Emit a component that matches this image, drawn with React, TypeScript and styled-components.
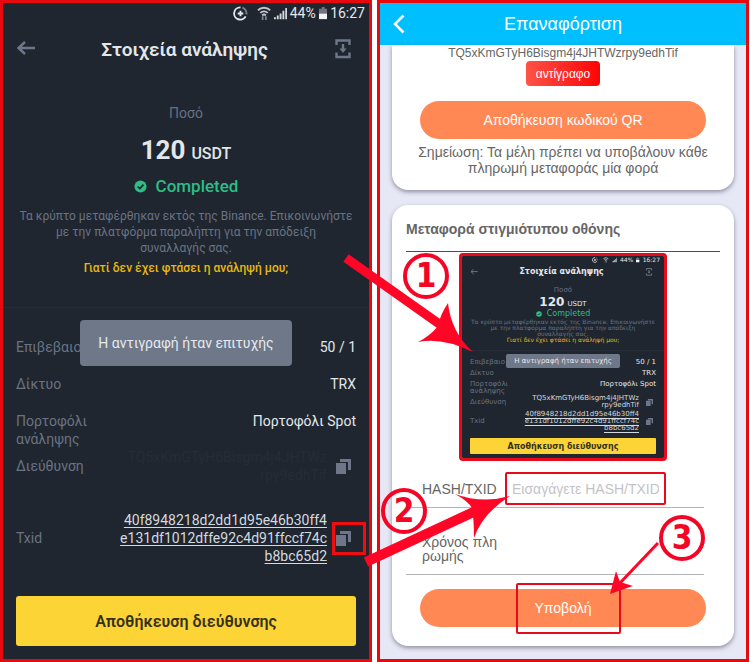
import React from "react";
import styled, { createGlobalStyle, css, ThemeProvider } from "styled-components";

const GlobalStyle = createGlobalStyle`
  *, *::before, *::after { box-sizing: border-box; }
  body { margin: 0; background: #fff; }
  button, input { font: inherit; }
  p, h1, h2, dl, dd, dt, figure { margin: 0; }
`;

/* ---------- Receipt metrics: full screen and attached preview ---------- */

const full = {
  font: '"Roboto", "Noto Sans", sans-serif',
  side: 13,
  statusH: 20, statusSize: 14, statusGap: 3, statusIcon: 15,
  headH: 52, headSize: 19, headIcon: 20,
  labelTop: 28, labelLine: 20, labelSize: 14,
  amountTop: 10, amountLine: 34, amountSize: 26, unitSize: 16, amountGap: 6,
  doneTop: 8, doneLine: 22, doneSize: 17, doneIcon: 13, doneGap: 9,
  descTop: 11, descLine: 16, descSize: 12,
  linkTop: 2, linkLine: 20, linkSize: 12,
  ruleTop: 29, listTop: 30,
  rowLine: 18, rowSize: 14, rowGap: 19, labelW: 90,
  txTop: 27, copyIcon: 15, copyW: 26,
  saveTop: 31, saveH: 50, saveSize: 16, saveRadius: 3, bottom: 13,
  toastTop: 317, toastH: 46, toastW: 212, toastSize: 14, toastRadius: 4,
  address: "#262c35",
};

const mini: typeof full = {
  font: '"DejaVu Sans", sans-serif',
  side: 8,
  statusH: 8, statusSize: 6, statusGap: 3, statusIcon: 6,
  headH: 15, headSize: 8, headIcon: 8,
  labelTop: 8, labelLine: 7, labelSize: 7,
  amountTop: 3, amountLine: 10, amountSize: 12, unitSize: 7, amountGap: 3,
  doneTop: 3, doneLine: 7, doneSize: 8, doneIcon: 6, doneGap: 5,
  descTop: 2, descLine: 6, descSize: 6,
  linkTop: 0, linkLine: 6, linkSize: 6,
  ruleTop: 7, listTop: 8,
  rowLine: 7, rowSize: 7, rowGap: 4, labelW: 50,
  txTop: 2, copyIcon: 7, copyW: 14,
  saveTop: 6, saveH: 16, saveSize: 8, saveRadius: 1, bottom: 4,
  toastTop: 98, toastH: 14, toastW: 114, toastSize: 7, toastRadius: 2,
  address: "#d5d9de",
};

type Metrics = { theme: any };

/* ---------- Page ---------- */

const Page = styled.main`
  position: relative;
  display: grid;
  grid-template-columns: 1fr 1fr;
  gap: 5px;
  padding-right: 1px;
`;

const Panel = styled.section<{ $bg: string }>`
  border: 3px solid #e60a0e;
  background: ${(p) => p.$bg};
  min-width: 0;
`;

/* ---------- Receipt ---------- */

const Receipt = styled.div<Metrics>`
  position: relative;
  background: #1f2630;
  color: #e3e6ea;
  font-family: ${(p) => p.theme.font};
  text-align: center;
  white-space: nowrap;
  height: 100%;
  padding-bottom: ${(p) => p.theme.bottom}px;
`;

const StatusBar = styled.div<Metrics>`
  display: flex;
  align-items: center;
  justify-content: flex-end;
  gap: ${(p) => p.theme.statusGap}px;
  height: ${(p) => p.theme.statusH}px;
  padding-right: 4px;
  font-size: ${(p) => p.theme.statusSize}px;
  line-height: 1;
  svg { height: ${(p) => p.theme.statusIcon}px; width: auto; }
`;

const ReceiptHead = styled.header<Metrics>`
  display: grid;
  grid-template-columns: auto 1fr auto;
  align-items: center;
  height: ${(p) => p.theme.headH}px;
  padding: 0 ${(p) => p.theme.side + 3}px 0 ${(p) => p.theme.side}px;
  svg { display: block; width: ${(p) => p.theme.headIcon}px; height: ${(p) => p.theme.headIcon}px; }
`;

const ReceiptTitle = styled.h1<Metrics>`
  font-size: ${(p) => p.theme.headSize}px;
  line-height: 1;
  font-weight: 600;
`;

const PlainButton = styled.button`
  position: relative;
  display: block;
  padding: 0;
  border: 0;
  background: none;
  color: #6d7789;
`;

const AmountLabel = styled.p<Metrics>`
  margin-top: ${(p) => p.theme.labelTop}px;
  line-height: ${(p) => p.theme.labelLine}px;
  font-size: ${(p) => p.theme.labelSize}px;
  color: #687182;
`;

const Amount = styled.p<Metrics>`
  display: flex;
  justify-content: center;
  align-items: baseline;
  gap: ${(p) => p.theme.amountGap}px;
  height: ${(p) => p.theme.amountLine}px;
  margin-top: ${(p) => p.theme.amountTop}px;
  line-height: ${(p) => p.theme.amountLine}px;
  font-size: ${(p) => p.theme.unitSize}px;
  font-weight: 500;
  strong { font-size: ${(p) => p.theme.amountSize}px; font-weight: 700; }
`;

const Done = styled.p<Metrics>`
  display: flex;
  justify-content: center;
  align-items: center;
  gap: ${(p) => p.theme.doneGap}px;
  margin-top: ${(p) => p.theme.doneTop}px;
  line-height: ${(p) => p.theme.doneLine}px;
  font-size: ${(p) => p.theme.doneSize}px;
  font-weight: 500;
  color: #2dbd85;
  svg { width: ${(p) => p.theme.doneIcon}px; height: ${(p) => p.theme.doneIcon}px; }
`;

const Description = styled.p<Metrics>`
  margin-top: ${(p) => p.theme.descTop}px;
  line-height: ${(p) => p.theme.descLine}px;
  font-size: ${(p) => p.theme.descSize}px;
  color: #6a7382;
`;

const HelpLink = styled.a<Metrics>`
  display: block;
  margin-top: ${(p) => p.theme.linkTop}px;
  line-height: ${(p) => p.theme.linkLine}px;
  font-size: ${(p) => p.theme.linkSize}px;
  font-weight: 500;
  color: #e6b90f;
  text-decoration: none;
`;

const Details = styled.dl<Metrics>`
  margin-top: ${(p) => p.theme.ruleTop}px;
  padding: ${(p) => p.theme.listTop}px ${(p) => p.theme.side}px 0;
  border-top: 1px solid #262d38;
  font-size: ${(p) => p.theme.rowSize}px;
  line-height: ${(p) => p.theme.rowLine}px;
`;

const DetailRow = styled.div<Metrics & { $space?: "row" | "tx"; $middle?: boolean }>`
  display: flex;
  justify-content: space-between;
  align-items: ${(p) => (p.$middle ? "center" : "flex-start")};
  margin-top: ${(p) => (p.$space === "row" ? p.theme.rowGap : p.$space === "tx" ? p.theme.txTop : 0)}px;
  dt { width: ${(p) => p.theme.labelW}px; text-align: left; color: #6a7382; }
  dd { display: flex; align-items: center; text-align: right; }
`;

const AddressText = styled.span<Metrics>`
  color: ${(p) => p.theme.address};
`;

const TxLink = styled.a`
  color: #d5d9de;
  text-decoration: underline;
  text-underline-offset: 2px;
  text-decoration-thickness: 1px;
`;

const CopyButton = styled(PlainButton)<Metrics & { $marked?: boolean }>`
  width: ${(p) => p.theme.copyW}px;
  svg { display: block; margin: 0 auto; width: ${(p) => p.theme.copyIcon}px; height: ${(p) => p.theme.copyIcon}px; }
  margin-left: 3px;
  ${(p) =>
    p.$marked &&
    css`
      &::after {
        content: "";
        position: absolute;
        inset: -9px -10px -9px 2px;
        border: 3px solid #ee0e12;
      }
    `}
`;

const SaveAddress = styled.button<Metrics>`
  display: block;
  width: calc(100% - ${(p) => p.theme.side * 2}px);
  height: ${(p) => p.theme.saveH}px;
  margin: ${(p) => p.theme.saveTop}px auto 0;
  padding: 0;
  border: 0;
  border-radius: ${(p) => p.theme.saveRadius}px;
  background: #fcd435;
  color: #35311f;
  font-size: ${(p) => p.theme.saveSize}px;
  font-weight: 600;
`;

const Toast = styled.div<Metrics>`
  position: absolute;
  top: ${(p) => p.theme.toastTop}px;
  left: 50%;
  transform: translateX(-50%);
  display: flex;
  align-items: center;
  justify-content: center;
  width: ${(p) => p.theme.toastW}px;
  height: ${(p) => p.theme.toastH}px;
  border-radius: ${(p) => p.theme.toastRadius}px;
  background: #6f7889;
  color: #e6e9ee;
  font-size: ${(p) => p.theme.toastSize}px;
`;

const CopyIcon = () => (
  <svg viewBox="0 0 15 15" fill="currentColor" aria-hidden="true">
    <path d="M0 4h10v11H0z" />
    <path d="M4 0h11v11h-3V3H4z" />
  </svg>
);

const ReceiptView = ({ preview = false }: { preview?: boolean }) => (
  <ThemeProvider theme={preview ? mini : full}>
    <Receipt>
      <StatusBar>
        <svg viewBox="0 0 22 16" fill="none" stroke="#e3e6ea" strokeWidth="2" aria-hidden="true">
          <path d="M8 1.5A6.5 6.5 0 1 0 13.5 11" />
          <path d="M10 1.8A6.5 6.5 0 0 1 14.3 9" stroke="#7c828c" />
          <path d="M8 5v6M5 8h6" />
        </svg>
        <svg viewBox="4 0 15 16" fill="none" stroke="#c5c9cf" strokeWidth="2" aria-hidden="true">
          <path d="M5 4.500a9.500 9.500 0 0 1 13 0M7.500 7.300a6 6 0 0 1 8 0M9.500 10a3 3 0 0 1 4 0" />
          <path d="M10 11v4M13.500 11v4" stroke="#767d88" />
        </svg>
        <svg viewBox="0 0 14 16" fill="#d5d8dd" aria-hidden="true">
          <path d="M0 12h2v2H0zM3 10h2v4H3zM6 8h2v6H6zM9 5h2v9H9zM12 2h2v12h-2z" />
        </svg>
        <span>44%</span>
        <svg viewBox="0 0 9 16" aria-hidden="true">
          <path d="M3 1h3v2h3v5H0V3h3z" fill="#70757e" />
          <path d="M0 8h9v6H0z" fill="#f2f3f5" />
        </svg>
        <span>16:27</span>
      </StatusBar>
      <ReceiptHead>
        <PlainButton aria-label="Πίσω">
          <svg viewBox="0 0 20 20" fill="none" stroke="currentColor" strokeWidth="2.400" aria-hidden="true">
            <path d="M19 9H2.500M9 3L2.500 9L9 15" />
          </svg>
        </PlainButton>
        <ReceiptTitle>Στοιχεία ανάληψης</ReceiptTitle>
        <PlainButton aria-label="Λήψη">
          <svg viewBox="0 0 20 20" fill="none" stroke="currentColor" strokeWidth="2.400" aria-hidden="true">
            <path d="M3.500 6V1.500h13V6M3.500 13.500v4.500h13v-4.500M10 5v7" />
            <path d="M6.500 9.500h7L10 14z" fill="currentColor" stroke="none" />
          </svg>
        </PlainButton>
      </ReceiptHead>
      <AmountLabel>Ποσό</AmountLabel>
      <Amount>
        <strong>120</strong>
        <span>USDT</span>
      </Amount>
      <Done>
        <svg viewBox="0 0 14 14" aria-hidden="true">
          <circle cx="7" cy="7" r="6.500" fill="#2dbd85" />
          <path d="M4 7l2.300 2.300L10.200 5" fill="none" stroke="#1f2630" strokeWidth="1.800" />
        </svg>
        Completed
      </Done>
      <Description>
        Τα κρύπτο μεταφέρθηκαν εκτός της Binance. Επικοινωνήστε
        <br />
        με την πλατφόρμα παραλήπτη για την απόδειξη
        <br />
        συναλλαγής σας.
      </Description>
      <HelpLink href="#help">Γιατί δεν έχει φτάσει η ανάληψή μου;</HelpLink>
      <Details>
        <DetailRow>
          <dt>Επιβεβαιο</dt>
          <dd>50 / 1</dd>
        </DetailRow>
        <DetailRow $space="row">
          <dt>Δίκτυο</dt>
          <dd>TRX</dd>
        </DetailRow>
        <DetailRow $space="row">
          <dt>
            Πορτοφόλι
            <br />
            ανάληψης
          </dt>
          <dd>Πορτοφόλι Spot</dd>
        </DetailRow>
        <DetailRow $middle>
          <dt>Διεύθυνση</dt>
          <dd>
            <AddressText>
              TQ5xKmGTyH6Bisgm4j4JHTWz
              <br />
              rpy9edhTif
            </AddressText>
            <CopyButton aria-label="Αντιγραφή διεύθυνσης">
              <CopyIcon />
            </CopyButton>
          </dd>
        </DetailRow>
        <DetailRow $space="tx" $middle>
          <dt>Txid</dt>
          <dd>
            <TxLink href="#txid">
              40f8948218d2dd1d95e46b30ff4
              <br />
              e131df1012dffe92c4d91ffccf74c
              <br />
              b8bc65d2
            </TxLink>
            <CopyButton aria-label="Αντιγραφή Txid" $marked={!preview}>
              <CopyIcon />
            </CopyButton>
          </dd>
        </DetailRow>
      </Details>
      <SaveAddress>Αποθήκευση διεύθυνσης</SaveAddress>
      <Toast role="status">Η αντιγραφή ήταν επιτυχής</Toast>
    </Receipt>
  </ThemeProvider>
);

/* ---------- Recharge form ---------- */

const Recharge = styled.div`
  font-family: "Liberation Sans", Arial, sans-serif;
  color: #666;
`;

const RechargeHead = styled.header`
  display: grid;
  grid-template-columns: 40px 1fr 40px;
  align-items: center;
  height: 42px;
  background: #00bfff;
  color: #fff;
  text-align: center;
  h2 { font-size: 18px; font-weight: 400; line-height: 24px; }
  svg { display: block; margin-left: 13px; }
`;

const BackButton = styled(PlainButton)`
  color: #fff;
`;

const Cards = styled.div`
  display: grid;
  gap: 15px;
  padding: 0 12px 13px;
`;

const Card = styled.section<{ $cut?: boolean }>`
  background: #fff;
  border-radius: ${(p) => (p.$cut ? "0 0 16px 16px" : "16px")};
  box-shadow: 0 2px 4px rgba(60, 60, 80, 0.5);
  padding: ${(p) => (p.$cut ? "0 14px 14px" : "14px 14px 19px")};
`;

const WalletAddress = styled.p`
  font-size: 12px;
  line-height: 16px;
  text-align: center;
`;

const CopyTag = styled.button`
  display: block;
  width: 74px;
  height: 25px;
  margin: 0 auto 15px;
  padding: 0;
  border: 0;
  border-radius: 4px;
  background: linear-gradient(90deg, #ff5347, #fb0505);
  color: #fff;
  font-size: 12px;
`;

const PillButton = styled.button`
  position: relative;
  display: block;
  width: calc(100% - 28px);
  height: 38px;
  margin: 0 auto;
  padding: 0;
  border: 0;
  border-radius: 19px;
  background: #ff8855;
  color: #fff;
  font-size: 14px;
`;

const Note = styled.p`
  margin-top: 5px;
  font-size: 14px;
  line-height: 16px;
  text-align: center;
`;

const CardTitle = styled.h2`
  padding-bottom: 12px;
  border-bottom: 1px solid #4d4d55;
  font-size: 14px;
  line-height: 20px;
`;

const Preview = styled.figure`
  width: 208px;
  margin: 1px auto 0;
  border: 3px solid #e60a1a;
  border-radius: 4px;
  overflow: hidden;
`;

const Field = styled.div<{ $tall?: boolean }>`
  display: flex;
  align-items: center;
  gap: 8px;
  height: ${(p) => (p.$tall ? 67 : 47)}px;
  margin-right: 16px;
  padding: ${(p) => (p.$tall ? "16px 0 0 16px" : "9px 0 0 16px")};
  border-bottom: 1px solid #b4b4b4;
  font-size: 14px;
  line-height: 14px;
  label { flex: none; width: 75px; word-break: break-all; }
  input {
    flex: 1;
    min-width: 0;
    height: 29px;
    padding: 0 5px;
    border: 0;
    background: none;
    color: #666;
    outline: none;
  }
  input::placeholder { color: #c3c3c7; opacity: 1; }
`;

const MarkedInput = styled.span`
  flex: none;
  width: 161px;
  display: flex;
  border: 2px solid #e60a1a;
  border-radius: 2px;
`;

const Submit = styled(PillButton)`
  margin-top: 14px;
  &::after {
    content: "";
    position: absolute;
    top: -6px;
    bottom: -7px;
    left: 50%;
    width: 105px;
    margin-left: -47px;
    border: 2px solid #e60a1a;
    border-radius: 2px;
  }
`;

/* ---------- Step annotations drawn over both panels ---------- */

const Arrows = styled.svg`
  position: absolute;
  left: 0;
  top: 0;
  pointer-events: none;
`;

const Step = styled.span<{ $x: number; $y: number }>`
  position: absolute;
  left: ${(p) => p.$x}px;
  top: ${(p) => p.$y}px;
  display: grid;
  place-items: center;
  width: 46px;
  height: 46px;
  border: 4px solid #f50525;
  border-radius: 50%;
  color: #f50525;
  font: bold 33px/36px "DejaVu Sans Condensed", "DejaVu Sans", sans-serif;
`;

export default function App() {
  return (
    <>
      <GlobalStyle />
      <Page>
        <Panel $bg="#1f2630">
          <ReceiptView />
        </Panel>
        <Panel $bg="#e6e8f5">
          <Recharge>
            <RechargeHead>
              <BackButton aria-label="Πίσω">
                <svg width="12" height="20" viewBox="0 0 12 20" fill="none" stroke="currentColor" strokeWidth="2.500" aria-hidden="true">
                  <path d="M10.500 1.500L2 10l8.500 8.500" />
                </svg>
              </BackButton>
              <h2>Επαναφόρτιση</h2>
            </RechargeHead>
            <Cards>
              <Card $cut>
                <WalletAddress>TQ5xKmGTyH6Bisgm4j4JHTWzrpy9edhTif</WalletAddress>
                <CopyTag>αντίγραφο</CopyTag>
                <PillButton>Αποθήκευση κωδικού QR</PillButton>
                <Note>
                  Σημείωση: Τα μέλη πρέπει να υποβάλουν κάθε πληρωμή μεταφοράς μία φορά
                </Note>
              </Card>
              <Card>
                <CardTitle>Μεταφορά στιγμιότυπου οθόνης</CardTitle>
                <Preview>
                  <ReceiptView preview />
                </Preview>
                <Field>
                  <label htmlFor="hash">HASH/TXID</label>
                  <MarkedInput>
                    <input id="hash" type="text" placeholder="Εισαγάγετε HASH/TXID" />
                  </MarkedInput>
                </Field>
                <Field $tall>
                  <label htmlFor="time">Χρόνος πληρωμής</label>
                  <input id="time" type="text" />
                </Field>
                <Submit>Υποβολή</Submit>
              </Card>
            </Cards>
          </Recharge>
        </Panel>
        <Arrows width="750" height="662" viewBox="0 0 750 662" fill="#ff0526" stroke="#ff0526" aria-hidden="true">
          <path d="M346 258L445 328" strokeWidth="9" />
          <path d="M473 352Q451 332 448 303Q440 315 438 326Q430 336 418 342Q442 337 473 352z" stroke="none" />
          <path d="M366 562L480 509" strokeWidth="10" />
          <path d="M510 496Q482 504 455 494Q468 501 472 508Q474 520 474 538Q482 514 510 496z" stroke="none" />
          <path d="M658 543L620 583" strokeWidth="3" />
          <path d="M610 594L616 571L620 582L633 586z" stroke="none" />
        </Arrows>
        <Step $x={403} $y={253}>1</Step>
        <Step $x={381} $y={488}>2</Step>
        <Step $x={659} $y={515}>3</Step>
      </Page>
    </>
  );
}
